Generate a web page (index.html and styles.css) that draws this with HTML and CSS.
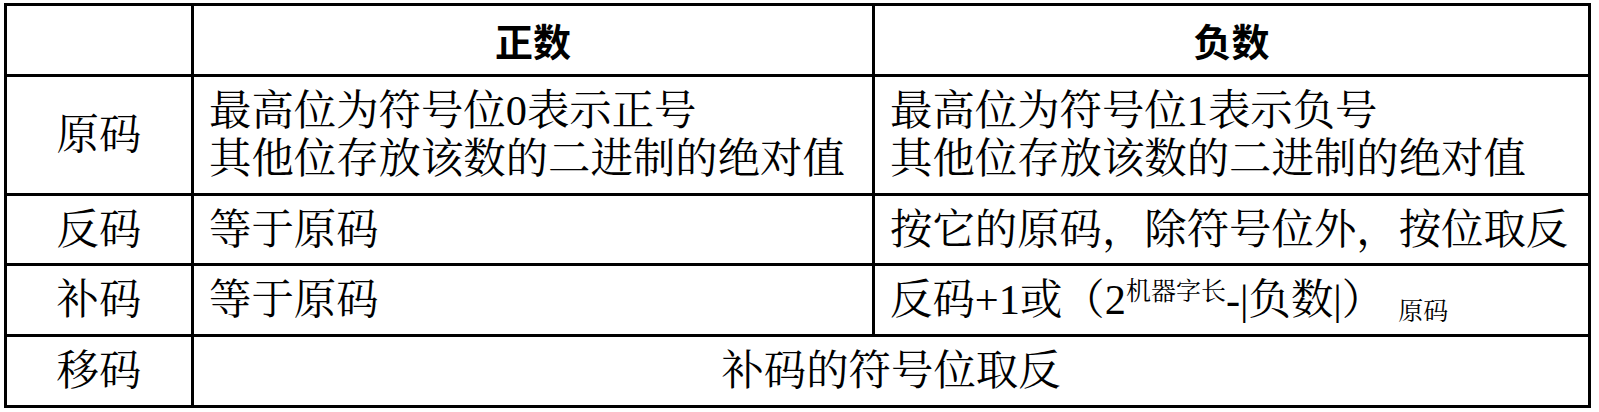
FILE: index.html
```html
<!DOCTYPE html>
<html lang="zh-CN">
<head>
<meta charset="utf-8">
<title>原码 反码 补码 移码</title>
<link rel="stylesheet" href="styles.css">
</head>
<body>
<div class="codes">
  <div class="cell corner"></div>
  <div class="cell head">正数</div>
  <div class="cell head">负数</div>

  <div class="cell label">原码</div>
  <div class="cell text"><div>最高位为符号位0表示正号<br>其他位存放该数的二进制的绝对值</div></div>
  <div class="cell text"><div>最高位为符号位1表示负号<br>其他位存放该数的二进制的绝对值</div></div>

  <div class="cell label">反码</div>
  <div class="cell text">等于原码</div>
  <div class="cell text">按它的原码，除符号位外，按位取反</div>

  <div class="cell label">补码</div>
  <div class="cell text">等于原码</div>
  <div class="cell text"><span>反码+1或（2<sup class="sup">机器字长</sup>-|负数|）<sub class="sub">原码</sub></span></div>

  <div class="cell label">移码</div>
  <div class="cell wide">补码的符号位取反</div>
</div>
</body>
</html>
```

FILE: styles.css
```css
html, body {
  margin: 0;
  padding: 0;
  background: #ffffff;
}

body {
  padding: 3px 0 0 4px;
  font-family: "Liberation Serif", "Noto Serif CJK SC", "Source Han Serif SC", "AR PL UMing CN", "Noto Sans CJK SC", serif;
  color: #000000;
}

.codes {
  display: grid;
  grid-template-columns: 187px 681px 716px;
  grid-template-rows: 71px 119px 70px 71px 71px;
  width: max-content;
  border-top: 3px solid #000;
  border-left: 3px solid #000;
}

.cell {
  box-sizing: border-box;
  border-right: 3px solid #000;
  border-bottom: 3px solid #000;
  display: flex;
  align-items: center;
  font-size: 42.4px;
  line-height: 48px;
  white-space: nowrap;
}

.head {
  justify-content: center;
  font-family: "Noto Sans CJK SC", sans-serif;
  font-weight: 700;
  font-size: 38px;
}

.label {
  justify-content: center;
}

.text {
  padding-left: 15px;
}

.wide {
  grid-column: span 2;
  justify-content: center;
}

.sup {
  font-size: 25px;
  line-height: 0;
  vertical-align: 14px;
}

.sub {
  font-size: 25px;
  line-height: 0;
  vertical-align: -6px;
  margin-left: 14px;
}
```
